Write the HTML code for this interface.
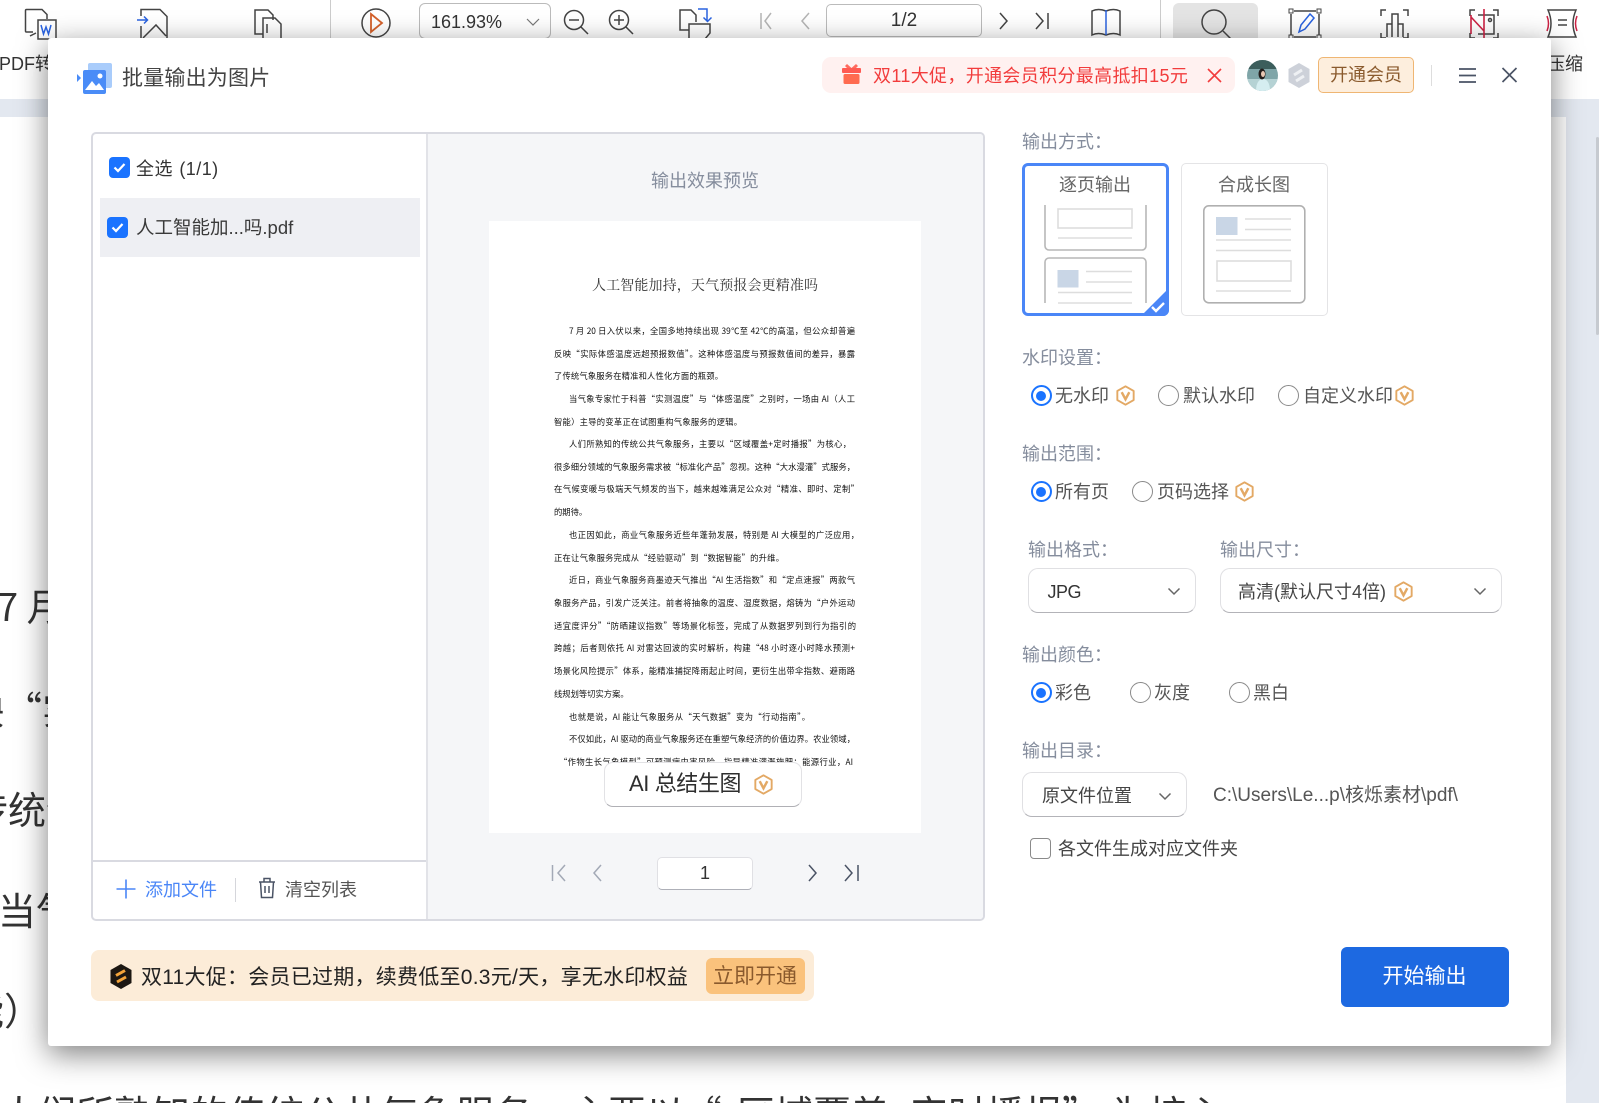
<!DOCTYPE html>
<html lang="zh-CN"><head><meta charset="utf-8"><title>批量输出为图片</title>
<style>
html,body{margin:0;padding:0;width:1599px;height:1103px;overflow:hidden;background:#fff}
*{box-sizing:border-box}
body{position:relative;font-family:"Liberation Sans","Noto Sans CJK SC",sans-serif;color:#444}
.a{position:absolute;white-space:nowrap}
.t{position:absolute;white-space:nowrap;height:28px;line-height:28px;font-size:18px}
.lb{color:#858d9d;margin-top:1px}
.doc{position:absolute;white-space:nowrap;font-family:"Noto Sans CJK SC",sans-serif;font-size:38px;line-height:50px;height:50px;color:#333}
.radio{position:absolute;width:21px;height:21px;border-radius:50%;border:1.5px solid #8a8a8a;background:#fff}
.radio.on{border:2px solid #1a73ff}
.radio.on:after{content:"";position:absolute;left:3.5px;top:3.5px;width:10px;height:10px;border-radius:50%;background:#1a73ff}
.sel{position:absolute;background:#fff;border:1px solid #e0e0e3;border-bottom:1.5px solid #b3b3b8;border-radius:10px}
.v{position:absolute;width:19px;height:21px}
.chev{position:absolute;width:14px;height:9px}
.pl{position:absolute;height:12px;line-height:12px;font-size:8.3px;white-space:nowrap;text-align:justify;text-align-last:justify;font-family:"Noto Sans CJK SC",sans-serif;color:#111}
.cb{position:absolute;width:21px;height:21px;background:#1a73ff;border-radius:4px}
</style></head><body>
<svg width="0" height="0" style="position:absolute"><symbol id="v" viewBox="0 0 20 22"><path d="M10 1.3 18.6 6.2V15.8L10 20.7 1.4 15.8V6.2Z" fill="none" stroke="#e3a965" stroke-width="2" stroke-linejoin="round"/><path d="M6 7.5 10 15 14 7.5" fill="none" stroke="#e3a965" stroke-width="2.6"/></symbol><symbol id="c" viewBox="0 0 14 9"><path d="M1.5 1.5 7 7l5.5-5.5" fill="none" stroke="#666" stroke-width="1.5"/></symbol></svg>

<!-- toolbar -->
<div class="a" style="left:0;top:0;width:1599px;height:99px;background:#fff"></div>
<div class="a" style="left:0;top:99px;width:1599px;height:1004px;background:#e3e8f0"></div>
<div class="a" style="left:0;top:117px;width:1566px;height:986px;background:#fff"></div>
<div class="a" style="left:1596px;top:137px;width:3px;height:198px;background:#c6cad0;border-radius:2px"></div>
<div class="a" style="left:1173px;top:3px;width:85px;height:40px;background:#e4e4e4;border-radius:6px"></div>
<div class="a" style="left:419px;top:3px;width:132px;height:36px;border:1px solid #bbb;border-radius:6px;background:#fff"></div>
<div class="a" style="left:826px;top:4px;width:156px;height:33px;border:1px solid #bbb;border-radius:5px;background:#fff"></div>
<div class="t" style="left:431px;top:8px;color:#333">161.93%</div>
<div class="t" style="left:826px;width:156px;text-align:center;top:7px;color:#333;font-size:19px">1/2</div>
<svg class="a" style="left:0;top:0" width="1599" height="40" viewBox="0 0 1599 40" fill="none" stroke="#444" stroke-width="1.5">
<path d="M33 32h-6.500a1 1 0 0 1-1-1V10.500a1 1 0 0 1 1-1H42l5 5V19"/><rect x="38" y="20" width="18" height="19"/><path d="M41 25l2.500 9 2.500-7 2.500 7 2.500-9" stroke="#2a63e0"/><path d="M30 36l6-3"/>
<path d="M141 16V9.500H160l7 7V39M141 26V39M143 38l13-13 10 11"/><path d="M137 20h10M144 16.500l3.500 3.500-3.500 3.500" stroke="#2a63e0"/>
<path d="M263 34h-8V10h13l5 5v5M263 18h12l6 6v15h-18z"/><path d="M267 24v9"/>
<path d="M330.500 0v40" stroke="#ccc" stroke-width="1"/><path d="M1160.500 0v40" stroke="#ccc" stroke-width="1"/>
<circle cx="376" cy="23" r="14"/><path d="M371 14l11 9-11 9z" stroke="#d4602a" stroke-width="1.800"/>
<path d="M527 19l6 6 6-6" stroke="#777" stroke-width="1.200"/>
<circle cx="574" cy="20" r="9.500"/><path d="M581 27l7 7M569 20h10"/>
<circle cx="619" cy="20" r="9.500"/><path d="M626 27l7 7M614 20h10M619 15v10"/>
<path d="M689 30h-9V10h11l5 5v7M689 24h21v9l-5 6h-16z"/><path d="M698 9h9v12M703.500 17.500l4 4 4-4" stroke="#2a63e0"/>
<path d="M761 13v16M771 13l-6 8 6 8M809 13l-7 8 7 8" stroke="#b5b5b5"/>
<path d="M1000 13l7 8-7 8M1036 13l7 8-7 8M1048 13v16"/>
<path d="M1092 11c4-2 9-2 14 0 5-2 10-2 14 0v24c-4-2-9-2-14 0-5-2-10-2-14 0z"/><path d="M1106 10v25" stroke="#2a63e0"/>
<circle cx="1214" cy="22" r="12"/><path d="M1223 31l9 9"/>
<path d="M1294 11h22M1294 37h22M1291 14v21M1319 14v21"/><rect x="1289" y="9" width="4" height="4" stroke-width="1"/><rect x="1317" y="9" width="4" height="4" stroke-width="1"/><rect x="1289" y="35" width="4" height="4" stroke-width="1"/><rect x="1317" y="35" width="4" height="4" stroke-width="1"/><path d="M1299 32l2-7 9-11 4 4-9 11z" stroke="#2a63e0"/>
<path d="M1381 16v-6h5M1403 10h5v6M1381 33v5h5M1403 38h5v-5M1387 37V24h5v13M1392 37V14h6v23M1398 24h5v13"/>
<path d="M1470 16v-6h5M1493 10h5v6M1470 33v5h5M1493 38h5v-5M1478 15h16v19h-16"/><path d="M1484 9v30M1471 17l13 14M1471 15v19" stroke="#cc2244" stroke-width="1.600"/><circle cx="1490" cy="20" r="1.500"/>
<path d="M1548 10h28c-4 9-4 18 0 27h-28c4-9 4-18 0-27z"/><path d="M1558 20h9M1558 25h9"/><path d="M1547 16c2 5 2 10 0 15M1577 16c-2 5-2 10 0 15" stroke="#cc2244"/>
</svg>
<div class="t" style="left:-1px;top:50px;color:#333">PDF转</div>
<div class="t" style="left:1547px;top:50px;color:#333;font-size:18px">压缩</div>

<!-- document behind -->
<div class="doc" style="left:-41px;top:580px">　7 月 20 日</div>
<div class="doc" style="left:-72px;top:683px">反映“实际体感</div>
<div class="doc" style="left:-68px;top:783px">了传统气象</div>
<div class="doc" style="left:-2px;top:884px">当气象</div>
<div class="doc" style="left:-72px;top:984px">智能）<span style="margin-left:4px">主导</span></div>
<div class="doc" style="left:0;top:1087px">人们所熟知的传统公共气象服务，主要以“<span style="margin-left:15px">区域覆盖+定时播报”</span><span style="margin-left:10px">为核心，</span></div>

<!-- dialog -->
<div class="a" style="left:48px;top:38px;width:1503px;height:1008px;background:#fff;border-radius:3px;box-shadow:0 8px 30px rgba(0,0,0,.5)"></div>

<!-- header -->
<svg class="a" style="left:76px;top:62px" width="38" height="32" viewBox="0 0 38 32"><rect x="12" y="1" width="24" height="25" rx="2" fill="#a9ccfb"/><rect x="7" y="8" width="23" height="24" rx="2" fill="#4a8cf7"/><path d="M1 12l4 4-4 4z" fill="#4a8cf7"/><path d="M9 28l7-9 4 5 3-3 5 7z" fill="#fff"/><circle cx="24" cy="14" r="2.500" fill="#fff"/></svg>
<div class="t" style="left:122px;top:65px;font-size:21px;color:#444;letter-spacing:.2px">批量输出为图片</div>
<div class="a" style="left:822px;top:57px;width:413px;height:36px;background:#fff1f0;border-radius:9px"></div>
<svg class="a" style="left:841px;top:62px" width="21" height="23" viewBox="0 0 21 23"><path d="M6 2l4.500 4L15 2l2 2-3 3H7L4 4z" fill="#ff6b5e"/><rect x="1" y="6" width="19" height="5" rx="1" fill="#ff5a52"/><rect x="2.500" y="12" width="16" height="10" rx="1.500" fill="#ff6b50"/></svg>
<div class="t" style="left:873px;top:62px;color:#f23c3c;letter-spacing:.34px">双11大促，开通会员积分最高抵扣15元</div>
<svg class="a" style="left:1207px;top:68px" width="15" height="15" viewBox="0 0 15 15"><path d="M1 1l13 13M14 1L1 14" stroke="#f23c3c" stroke-width="1.600"/></svg>
<svg class="a" style="left:1247px;top:60px" width="31" height="31" viewBox="0 0 31 31"><defs><clipPath id="av"><circle cx="15.500" cy="15.500" r="15.500"/></clipPath></defs><g clip-path="url(#av)"><rect width="31" height="31" fill="#7fa5a8"/><rect y="0" width="31" height="9" fill="#3c5e5c"/><rect y="19" width="31" height="12" fill="#b5d2d4"/><path d="M9 31c0-8 3-12 7-12s7 4 7 12z" fill="#d5edf0"/><ellipse cx="15" cy="14" rx="3.500" ry="5.500" fill="#241d1b"/><ellipse cx="16" cy="14" rx="2" ry="3" fill="#e9c8b4"/></g></svg>
<svg class="a" style="left:1288px;top:63px" width="22" height="25" viewBox="0 0 22 25"><path d="M11 0 21.500 6V19L11 25 .5 19V6Z" fill="#cdd1d9"/><path d="M6 12l8-5M8 18l8-5" stroke="#eef0f3" stroke-width="3"/></svg>
<div class="a" style="left:1318px;top:57px;width:96px;height:36px;background:#fdeedd;border:1.5px solid #efb673;border-radius:5px;text-align:center;line-height:35px;font-size:18px;color:#8a5a2d">开通会员</div>
<div class="a" style="left:1431px;top:65px;width:1px;height:21px;background:#ddd"></div>
<svg class="a" style="left:1458px;top:66px" width="60" height="18" viewBox="0 0 60 18" fill="none" stroke="#4a5365" stroke-width="1.700"><path d="M1 3h17M1 9.500h17M1 16h17M44.500 2l14 14M58.500 2l-14 14"/></svg>

<!-- main panel -->
<div class="a" style="left:91px;top:132px;width:894px;height:789px;border:2px solid #d9dae1;border-radius:5px;background:#fff"></div>
<div class="a" style="left:428px;top:134px;width:555px;height:785px;background:#f5f6f8;border-radius:0 3px 3px 0"></div>
<div class="a" style="left:426px;top:134px;width:2px;height:785px;background:#e2e3e8"></div>
<div class="a" style="left:93px;top:860px;width:333px;height:2px;background:#d9dae1"></div>

<div class="cb" style="left:108.500px;top:157px"></div>
<svg class="a" style="left:108.500px;top:157px" width="21" height="21" viewBox="0 0 21 21"><path d="M5.500 10.500l3.500 3.500 6.500-7" fill="none" stroke="#fff" stroke-width="2.200"/></svg>
<div class="t" style="left:136px;top:155px;font-size:18px;color:#333;word-spacing:1px;letter-spacing:.45px">全选 (1/1)</div>
<div class="a" style="left:100px;top:198px;width:320px;height:59px;background:#eeeff3"></div>
<div class="cb" style="left:107px;top:217px"></div>
<svg class="a" style="left:107px;top:217px" width="21" height="21" viewBox="0 0 21 21"><path d="M5.500 10.500l3.500 3.500 6.500-7" fill="none" stroke="#fff" stroke-width="2.200"/></svg>
<div class="t" style="left:136px;top:214px;font-size:18.500px;color:#3a3a3a">人工智能加...吗.pdf</div>

<svg class="a" style="left:115px;top:878px" width="22" height="22" viewBox="0 0 22 22"><path d="M11 1.500v19M1.500 11h19" stroke="#4a86f7" stroke-width="1.600"/></svg>
<div class="t" style="left:145px;top:876px;color:#4a86f7">添加文件</div>
<div class="a" style="left:235px;top:878px;width:1px;height:24px;background:#d5d6db"></div>
<svg class="a" style="left:258px;top:877px" width="18" height="22" viewBox="0 0 18 22" fill="none" stroke="#4a5365" stroke-width="1.500"><path d="M1 5h16M6 5V1.500h6V5M2.500 5l1 15.500h11l1-15.500M7 9v7M11 9v7"/></svg>
<div class="t" style="left:285px;top:876px;color:#555">清空列表</div>

<div class="t" style="left:651px;top:167px;color:#858d9d">输出效果预览</div>

<!-- paper -->
<div class="a" style="left:489px;top:221px;width:432px;height:612px;background:#fff"></div>
<div style="filter:blur(.35px)">
<div class="a" style="left:592px;width:226px;top:275px;height:20px;line-height:20px;font-size:14px;font-family:'Noto Serif CJK SC',serif;color:#333;text-align:justify;text-align-last:justify">人工智能加持，天气预报会更精准吗</div>
<div class="pl" style="left:569px;width:286px;top:325px">7 月 20 日入伏以来，全国多地持续出现 39℃至 42℃的高温，但公众却普遍</div>
<div class="pl" style="left:554px;width:301px;top:348px">反映“实际体感温度远超预报数值”。这种体感温度与预报数值间的差异，暴露</div>
<div class="pl" style="left:554px;width:169px;top:370px">了传统气象服务在精准和人性化方面的瓶颈。</div>
<div class="pl" style="left:569px;width:286px;top:393px">当气象专家忙于科普“实测温度”与“体感温度”之别时，一场由 AI（人工</div>
<div class="pl" style="left:554px;width:188px;top:416px">智能）主导的变革正在试图重构气象服务的逻辑。</div>
<div class="pl" style="left:569px;width:282px;top:438px">人们所熟知的传统公共气象服务，主要以“区域覆盖+定时播报”为核心，</div>
<div class="pl" style="left:554px;width:301px;top:461px">很多细分领域的气象服务需求被“标准化产品”忽视。这种“大水漫灌”式服务，</div>
<div class="pl" style="left:554px;width:305px;top:483px">在气候变暖与极端天气频发的当下，越来越难满足公众对“精准、即时、定制”</div>
<div class="pl" style="left:554px;width:30px;top:506px">的期待。</div>
<div class="pl" style="left:569px;width:290px;top:529px">也正因如此，商业气象服务近些年蓬勃发展，特别是 AI 大模型的广泛应用，</div>
<div class="pl" style="left:554px;width:230px;top:552px">正在让气象服务完成从“经验驱动”到“数据智能”的升维。</div>
<div class="pl" style="left:569px;width:286px;top:574px">近日，商业气象服务商墨迹天气推出“AI 生活指数”和“定点速报”两款气</div>
<div class="pl" style="left:554px;width:301px;top:597px">象服务产品，引发广泛关注。前者将抽象的温度、湿度数据，熔铸为“户外运动</div>
<div class="pl" style="left:554px;width:302px;top:620px">适宜度评分”“防晒建议指数”等场景化标签，完成了从数据罗列到行为指引的</div>
<div class="pl" style="left:554px;width:301px;top:642px">跨越；后者则依托 AI 对雷达回波的实时解析，构建“48 小时逐小时降水预测+</div>
<div class="pl" style="left:554px;width:301px;top:665px">场景化风险提示”体系，能精准捕捉降雨起止时间，更衍生出带伞指数、避雨路</div>
<div class="pl" style="left:554px;width:74px;top:688px">线规划等切实方案。</div>
<div class="pl" style="left:569px;width:241px;top:711px">也就是说，AI 能让气象服务从“天气数据”变为“行动指南”。</div>
<div class="pl" style="left:569px;width:286px;top:733px">不仅如此，AI 驱动的商业气象服务还在重塑气象经济的价值边界。农业领域，</div>
<div class="pl" style="left:559px;width:294px;top:756px">“作物生长气象模型”可预测病虫害风险，指导精准灌溉施肥；能源行业，AI</div>
</div>
<div class="a" style="left:604px;top:762px;width:198px;height:45px;background:#fff;border:1px solid #e2e2e5;border-bottom:1.5px solid #b0b0b5;border-radius:9px"></div>
<div class="t" style="left:629px;top:770px;font-size:22px;color:#2e2e2e;letter-spacing:-.4px">AI 总结生图</div>
<svg class="v" style="left:753.500px;top:774px"><use href="#v"/></svg>

<svg class="a" style="left:550px;top:862px" width="315" height="24" viewBox="0 0 315 24" fill="none" stroke-width="1.500"><path d="M2.500 3v16M15 3l-7 8 7 8M51 3l-7 8 7 8" stroke="#a3a9b6"/><path d="M259 3l7 8-7 8M295 3l7 8-7 8M308 3v16" stroke="#4a5365"/></svg>
<div class="a" style="left:657px;top:857px;width:96px;height:33px;background:#fff;border:1px solid #e0e0e4;border-bottom:1.5px solid #aeb0b8;border-radius:5px;text-align:center;line-height:31px;font-size:18px;color:#333">1</div>

<!-- right column -->
<div class="t lb" style="left:1022px;top:127px">输出方式：</div>
<div class="a" style="left:1181px;top:163px;width:147px;height:153px;background:#fff;border:1px solid #e4e4e6;border-radius:5px"></div>
<div class="a" style="left:1022px;top:163px;width:147px;height:153px;background:#fff;border:3px solid #4a86f7;border-radius:6px"></div>
<div class="t" style="left:1021.500px;width:147px;text-align:center;top:171px;color:#666">逐页输出</div>
<div class="t" style="left:1181px;width:146px;text-align:center;top:171px;color:#666">合成长图</div>
<svg class="a" style="left:1040px;top:200px" width="130" height="116" viewBox="1040 200 130 116" fill="none" stroke-width="1.600">
<path d="M1045 205v41a4 4 0 0 0 4 4h93a4 4 0 0 0 4-4v-41" stroke="#b7b7b7"/>
<rect x="1058" y="209" width="74" height="19" stroke="#ddd"/><path d="M1058 238h74" stroke="#ddd"/>
<path d="M1045 303v-41a4 4 0 0 1 4-4h93a4 4 0 0 1 4 4v41" stroke="#b7b7b7"/>
<rect x="1057.500" y="270" width="21" height="17.500" fill="#c9d6e6"/>
<path d="M1086 271.500h46M1086 282h46M1058 292.500h74M1058 303h74" stroke="#ddd"/>
<path d="M1141 316h22a6 6 0 0 0 6-6v-22z" fill="#4a86f7"/>
<path d="M1152 307l4 4 8-8" stroke="#fff" stroke-width="2.400"/>
</svg>
<svg class="a" style="left:1200px;top:200px" width="110" height="110" viewBox="1200 200 110 110" fill="none" stroke-width="1.600">
<rect x="1203.800" y="205.800" width="101" height="97" rx="5" stroke="#b0b0b0"/>
<rect x="1216" y="217" width="21.500" height="18" fill="#c9d6e6"/>
<path d="M1245 219h46M1245 229.500h46M1216 240h75M1216 250.500h75" stroke="#ddd"/>
<rect x="1217" y="261" width="74" height="20" stroke="#ddd"/><path d="M1216 291h75" stroke="#ddd"/>
</svg>

<div class="t lb" style="left:1022px;top:342.500px">水印设置：</div>
<div class="radio on" style="left:1030.500px;top:385px"></div><div class="t" style="left:1055px;top:382px;color:#555">无水印</div><svg class="v" style="left:1116px;top:385px"><use href="#v"/></svg>
<div class="radio" style="left:1158px;top:385px"></div><div class="t" style="left:1183px;top:382px;color:#555">默认水印</div>
<div class="radio" style="left:1278px;top:385px"></div><div class="t" style="left:1303px;top:382px;color:#555">自定义水印</div><svg class="v" style="left:1395px;top:385px"><use href="#v"/></svg>

<div class="t lb" style="left:1022px;top:438.500px">输出范围：</div>
<div class="radio on" style="left:1030.500px;top:481px"></div><div class="t" style="left:1055px;top:478px;color:#555">所有页</div>
<div class="radio" style="left:1132px;top:481px"></div><div class="t" style="left:1157px;top:478px;color:#555">页码选择</div><svg class="v" style="left:1235px;top:481px"><use href="#v"/></svg>

<div class="t lb" style="left:1028px;top:534.500px">输出格式：</div>
<div class="t lb" style="left:1220px;top:534.500px">输出尺寸：</div>
<div class="sel" style="left:1028px;top:568px;width:168px;height:45px"></div>
<div class="t" style="left:1047.500px;top:578px;color:#333;letter-spacing:-.5px">JPG</div>
<svg class="chev" style="left:1167px;top:587px"><use href="#c"/></svg>
<div class="sel" style="left:1220px;top:568px;width:282px;height:45px"></div>
<div class="t" style="left:1238px;top:578px;color:#444">高清(默认尺寸4倍)</div>
<svg class="v" style="left:1394px;top:581px"><use href="#v"/></svg>
<svg class="chev" style="left:1473px;top:587px"><use href="#c"/></svg>

<div class="t lb" style="left:1022px;top:639.500px">输出颜色：</div>
<div class="radio on" style="left:1030.500px;top:682px"></div><div class="t" style="left:1055px;top:679px;color:#555">彩色</div>
<div class="radio" style="left:1130px;top:682px"></div><div class="t" style="left:1154px;top:679px;color:#555">灰度</div>
<div class="radio" style="left:1228.500px;top:682px"></div><div class="t" style="left:1253px;top:679px;color:#555">黑白</div>

<div class="t lb" style="left:1022px;top:735.500px">输出目录：</div>
<div class="sel" style="left:1022px;top:772px;width:165px;height:45px"></div>
<div class="t" style="left:1042px;top:782px;color:#444">原文件位置</div>
<svg class="chev" style="left:1158px;top:792px"><use href="#c"/></svg>
<div class="t" style="left:1213px;top:782px;color:#555;font-size:19px">C:\Users\Le...p\核烁素材\pdf\</div>
<div class="a" style="left:1030px;top:838px;width:21px;height:21px;border:1.5px solid #8a8a8a;border-radius:4px;background:#fff"></div>
<div class="t" style="left:1058px;top:835px;color:#444">各文件生成对应文件夹</div>

<!-- footer -->
<div class="a" style="left:91px;top:950px;width:723px;height:51px;background:#fcecd8;border-radius:8px"></div>
<svg class="a" style="left:110px;top:964px" width="22" height="25" viewBox="0 0 22 25"><path d="M11 0 21.500 6V19L11 25 .5 19V6Z" fill="#1c1712"/><path d="M6 11.500l9-5M7 18l9-5" stroke="#f2a33a" stroke-width="3"/></svg>
<div class="t" style="left:141px;top:964px;font-size:21px;color:#222;letter-spacing:.25px">双11大促：会员已过期，续费低至0.3元/天，享无水印权益</div>
<div class="a" style="left:705.500px;top:958px;width:99px;height:36px;background:#fac27c;border-radius:6px;text-align:center;line-height:38px;font-size:21px;color:#8a5a2d">立即开通</div>
<div class="a" style="left:1340.500px;top:947px;width:168px;height:60px;background:#1d69e1;border-radius:6px;text-align:center;line-height:60px;font-size:21px;color:#fff">开始输出</div>
</body></html>
